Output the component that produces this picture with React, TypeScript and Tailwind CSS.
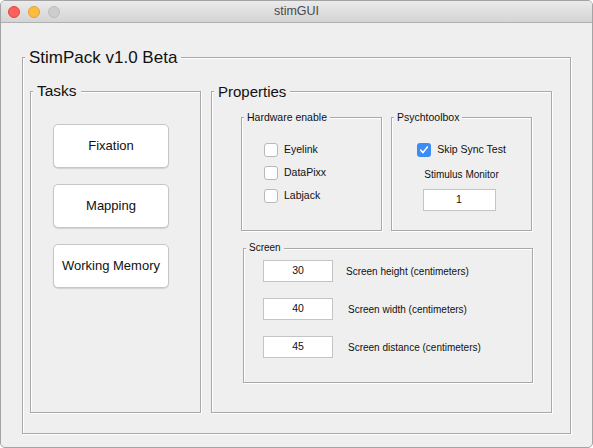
import { ReactNode } from "react";

const Group = ({ title, titleClass = "", className = "", children }: { title: string; titleClass?: string; className?: string; children?: ReactNode }) => (
    <div className={`relative border border-[#a9a9a9] shadow-[inset_1px_1px_0_#fff,1px_1px_0_#fff] ${className}`}>
        <span className={`absolute top-[-1px] -translate-y-1/2 bg-[#efefef] leading-none whitespace-nowrap text-[#111] ${titleClass}`}>
            {title}
        </span>
        {children}
    </div>
);

const TaskButton = ({ label }: { label: string }) => (
    <button className="w-[116px] h-[44px] rounded-[5px] border border-[#c6c6c6] bg-white text-[13px] text-[#111] shadow-[0_1px_1px_rgba(0,0,0,0.12)]">
        {label}
    </button>
);

const Check = ({ label, checked = false }: { label: string; checked?: boolean }) => (
    <div className="flex items-center gap-[6px] h-[14px]">
        {checked ? (
            <span className="flex items-center justify-center w-[14px] h-[14px] rounded-[3px] bg-[#3b8cf5]">
                <svg width="10" height="10" viewBox="0 0 10 10">
                    <polyline points="1.8,5.2 4,7.6 8.4,2" fill="none" stroke="#fff" strokeWidth="1.6" strokeLinecap="round" strokeLinejoin="round" />
                </svg>
            </span>
        ) : (
            <span className="w-[14px] h-[14px] rounded-[3px] border border-[#b8b8b8] bg-white" />
        )}
        <span className="text-[10.5px] text-[#111]">{label}</span>
    </div>
);

const Field = ({ value, className = "" }: { value: string; className?: string }) => (
    <div className={`flex items-center justify-center h-[22px] border border-[#c4c4c4] bg-white text-[10.5px] text-[#111] ${className}`}>
        {value}
    </div>
);

const ScreenRow = ({ value, label, gap }: { value: string; label: string; gap: string }) => (
    <div className="flex items-center">
        <Field value={value} className="w-[70px]" />
        <span className={`text-[10px] text-[#111] ${gap}`}>{label}</span>
    </div>
);

export default function App() {
    return (
        <div className="w-[593px] h-[448px] flex flex-col bg-[#efefef] border border-[#a4a4a4] rounded-[5px] overflow-hidden font-['Liberation_Sans',Arial,sans-serif]">
            <div className="grid grid-cols-[1fr_auto_1fr] items-center h-[22px] shrink-0 bg-gradient-to-b from-[#ebebeb] to-[#d4d4d4] border-b border-[#b0b0b0]">
                <div className="flex gap-[8px] pl-[7px]">
                    <span className="w-[12px] h-[12px] rounded-full bg-[#fc605c] border border-[#e2463f]" />
                    <span className="w-[12px] h-[12px] rounded-full bg-[#fdbc40] border border-[#dea236]" />
                    <span className="w-[12px] h-[12px] rounded-full bg-[#cdcdcd] border border-[#bdbdbd]" />
                </div>
                <span className="text-[12.5px] text-[#4a4a4a]">stimGUI</span>
                <div />
            </div>

            <div className="pl-[21px] pt-[34px]">
                <Group title="StimPack v1.0 Beta" titleClass="left-[2px] px-[4px] text-[17px]" className="w-[549px] h-[377px] pl-[7px] pt-[33px]">
                    <div className="flex gap-[10px]">
                        <Group title="Tasks" titleClass="left-[2px] px-[4px] text-[15.5px]" className="w-[171px] h-[322px] pl-[22px] pt-[32px]">
                            <div className="flex flex-col gap-[16px]">
                                <TaskButton label="Fixation" />
                                <TaskButton label="Mapping" />
                                <TaskButton label="Working Memory" />
                            </div>
                        </Group>

                        <Group title="Properties" titleClass="left-[2px] px-[4px] text-[15px]" className="w-[341px] h-[322px] pl-[29px] pt-[25px]">
                            <div className="flex gap-[9px]">
                                <Group title="Hardware enable" titleClass="left-[2px] px-[3px] text-[10.5px]" className="w-[141px] h-[114px] pl-[22px] pt-[25px]">
                                    <div className="flex flex-col gap-[9px]">
                                        <Check label="Eyelink" />
                                        <Check label="DataPixx" />
                                        <Check label="Labjack" />
                                    </div>
                                </Group>

                                <Group title="Psychtoolbox" titleClass="left-[2px] px-[3px] text-[10.5px]" className="w-[141px] h-[114px] pt-[25px]">
                                    <div className="flex flex-col items-center">
                                        <Check label="Skip Sync Test" checked />
                                        <span className="mt-[10px] text-[10px] text-[#111]">Stimulus Monitor</span>
                                        <Field value="1" className="w-[73px] mt-[7px] -ml-[5px]" />
                                    </div>
                                </Group>
                            </div>

                            <Group title="Screen" titleClass="left-[2px] px-[3px] text-[10px]" className="w-[290px] h-[135px] ml-[2px] mt-[17px] pl-[19px] pt-[11px]">
                                <div className="flex flex-col gap-[16px]">
                                    <ScreenRow value="30" label="Screen height (centimeters)" gap="ml-[13px]" />
                                    <ScreenRow value="40" label="Screen width (centimeters)" gap="ml-[15px]" />
                                    <ScreenRow value="45" label="Screen distance (centimeters)" gap="ml-[15px]" />
                                </div>
                            </Group>
                        </Group>
                    </div>
                </Group>
            </div>
        </div>
    );
}
